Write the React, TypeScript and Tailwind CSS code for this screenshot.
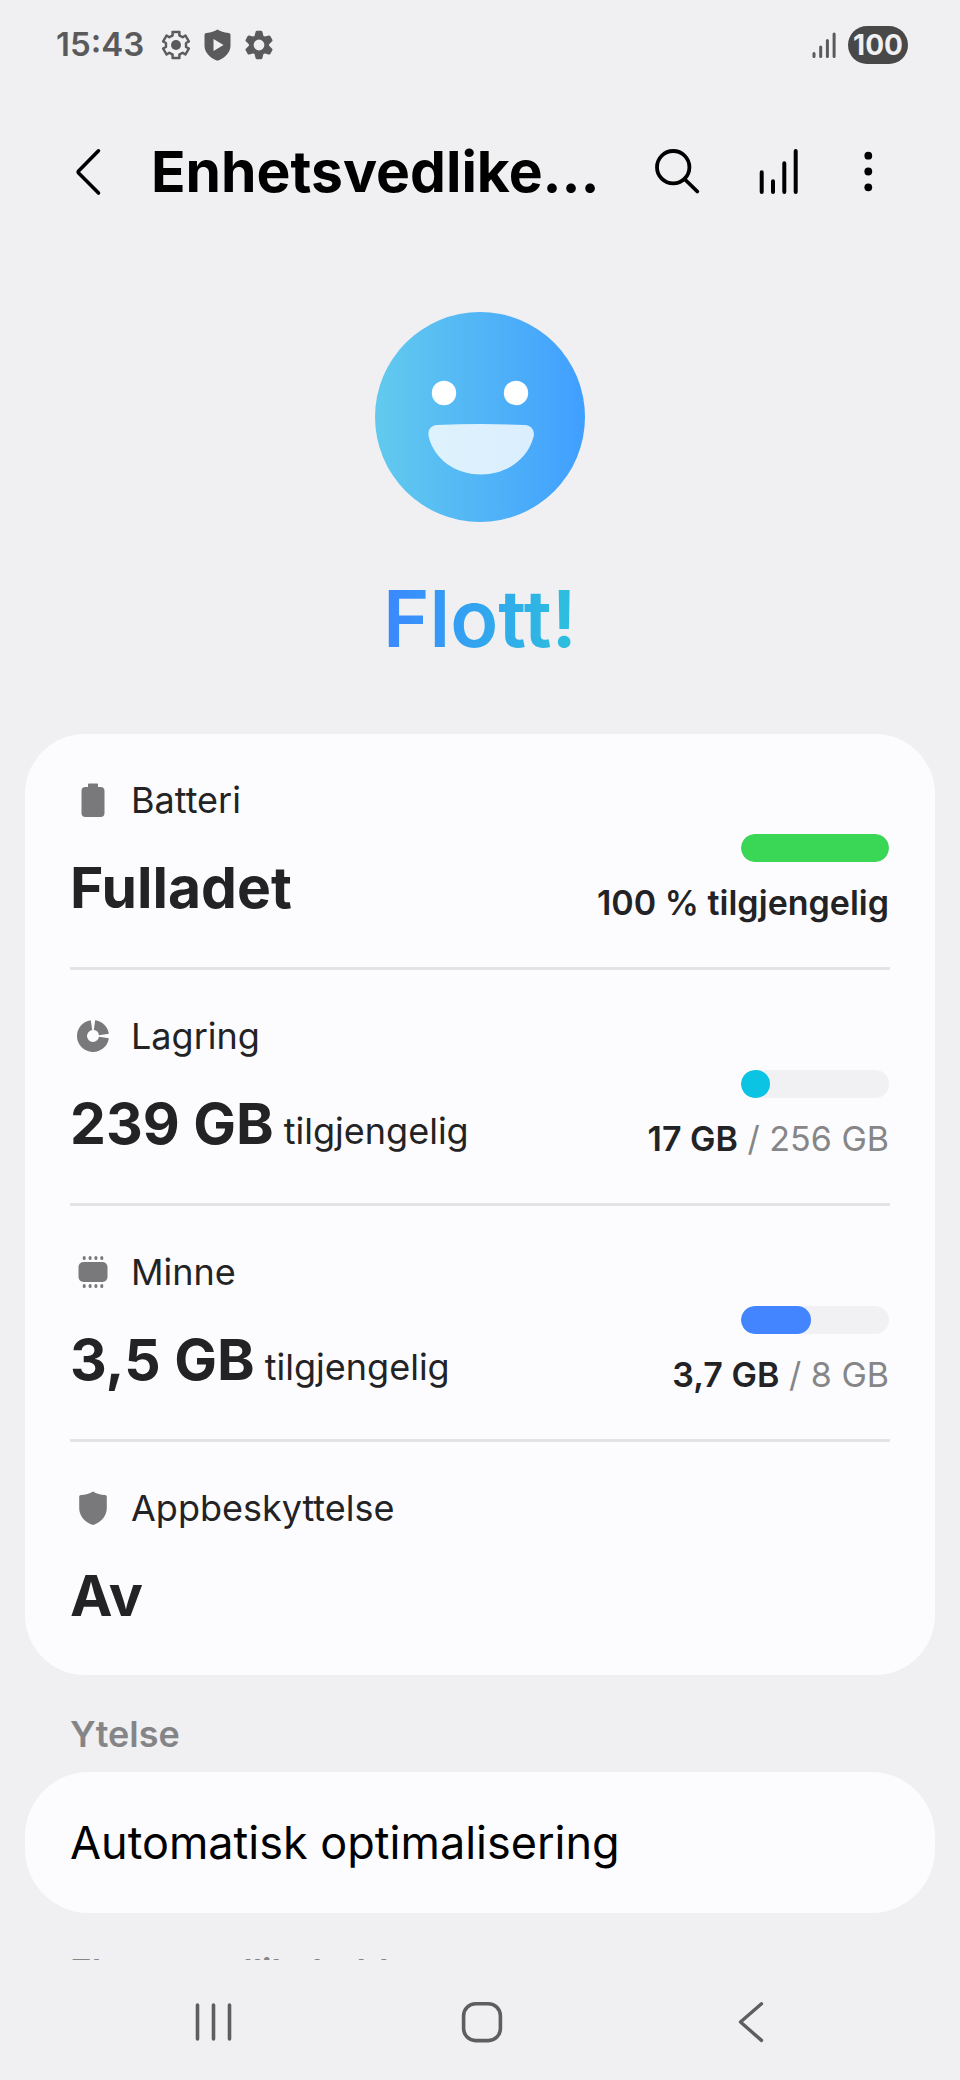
import type { ReactNode } from 'react';

// Outline of a cogwheel centred in a 30x30 box
function gearPath(
  inner: number,
  outer: number,
  innerSpread: number,
  outerSpread: number
) {
  const points: string[] = [];
  for (let i = 0; i < 6; i++) {
    const mid = i * 60 - 90;
    const corners = [
      [inner, mid - innerSpread],
      [outer, mid - outerSpread],
      [outer, mid + outerSpread],
      [inner, mid + innerSpread],
    ];
    for (const [radius, degrees] of corners) {
      const angle = (degrees * Math.PI) / 180;
      points.push(
        `${(15 + radius * Math.cos(angle)).toFixed(2)} ${(15 + radius * Math.sin(angle)).toFixed(2)}`
      );
    }
  }
  return `M${points.join('L')}Z`;
}

function GearOutlineIcon() {
  return (
    <svg viewBox="0 0 30 30" className="size-[30px]" aria-hidden="true">
      <path
        d={gearPath(10.2, 13.4, 19, 15)}
        fill="none"
        stroke="currentColor"
        strokeWidth="2.4"
        strokeLinejoin="round"
      />
      <circle cx="15" cy="15" r="5" fill="currentColor" />
    </svg>
  );
}

function GearSolidIcon() {
  return (
    <svg viewBox="0 0 30 30" className="size-[30px]" aria-hidden="true">
      <path
        d={gearPath(8.8, 13, 22, 9)}
        fill="currentColor"
        stroke="currentColor"
        strokeWidth="2.8"
        strokeLinejoin="round"
      />
      <circle cx="15" cy="15" r="5.4" fill="#f0f0f2" />
    </svg>
  );
}

function ShieldPlayIcon() {
  return (
    <svg viewBox="0 0 27 32" className="h-8 w-[27px]" aria-hidden="true">
      <path
        d="M13.5.5c2.9 2 6.5 3.1 11 3.5 1.2.1 2 .9 2 2v10.5c0 6.5-4.5 12-13 15.2C5 28.5.5 23 .5 16.5V6c0-1.1.8-1.9 2-2C7 3.6 10.6 2.5 13.5.5Z"
        fill="currentColor"
      />
      <path d="M9.5 10v12l10-6Z" fill="#f0f0f2" />
    </svg>
  );
}

function SignalIcon() {
  return (
    <svg
      viewBox="0 0 24 26"
      className="h-[26px] w-6"
      stroke="currentColor"
      strokeWidth="3"
      strokeLinecap="round"
      aria-hidden="true"
    >
      <path d="M2 21.5v3M8.7 15v9.5M15.4 8.5v16M22.1 2v22.5" />
    </svg>
  );
}

function BatteryIcon() {
  return (
    <svg viewBox="0 0 34 34" className="size-[34px]" fill="currentColor">
      <path d="M12 1.5Q12 .5 13 .5h8q1 0 1 1V4h2.5Q28.5 4 28.5 8v22q0 4-4 4h-15Q5.5 34 5.5 30V8q0-4 4-4H12Z" />
    </svg>
  );
}

function StorageIcon() {
  return (
    <svg
      viewBox="0 0 34 34"
      className="size-[34px]"
      fill="none"
      stroke="currentColor"
      strokeWidth="10"
    >
      <path d="M18.5 6.1A11 11 0 0 1 27.9 15.5M27.9 18.5A11 11 0 1 1 15.5 6.1" />
    </svg>
  );
}

function MemoryIcon() {
  return (
    <svg viewBox="0 0 34 34" className="size-[34px]" fill="currentColor">
      <rect x="2.5" y="7" width="29" height="20" rx="5" />
      <path
        d="M8.2 2.4v1M14.1 2.4v1M19.9 2.4v1M25.8 2.4v1M8.2 30.6v1M14.1 30.6v1M19.9 30.6v1M25.8 30.6v1"
        stroke="currentColor"
        strokeWidth="3"
        strokeLinecap="round"
      />
    </svg>
  );
}

function ShieldIcon() {
  return (
    <svg viewBox="0 0 34 34" className="size-[34px]" fill="currentColor">
      <path d="M17 .5c3.5 2.2 7.5 3.2 12 3.6 1.2.1 1.8.8 1.8 1.9v11c0 7.5-5 13.5-12.3 16.6q-1.5.6-3 0C8.2 30.5 3.2 24.5 3.2 17V6c0-1.1.6-1.8 1.8-1.9C9.5 3.7 13.5 2.7 17 .5Z" />
    </svg>
  );
}

function SmileyIcon() {
  return (
    <svg viewBox="0 0 210 210" className="size-[210px]" aria-hidden="true">
      <defs>
        <linearGradient id="face" x1="0" x2="1" y1="0" y2="0">
          <stop offset="0" stopColor="#62caee" />
          <stop offset="0.5" stopColor="#52b5f6" />
          <stop offset="1" stopColor="#409fff" />
        </linearGradient>
      </defs>
      <circle cx="105" cy="105" r="105" fill="url(#face)" />
      <circle cx="69" cy="81" r="12.2" fill="#fff" />
      <circle cx="141" cy="81" r="12.2" fill="#fff" />
      <path
        d="M62 113Q106 111 150 113C157 113.5 160 119 158.5 125C153 146 133 162.5 106 162.5S59 146 53.8 125C52.3 119 55 113.5 62 113Z"
        fill="#fff"
        fillOpacity="0.8"
      />
    </svg>
  );
}

type Status = {
  label: string;
  icon: ReactNode;
  value: string;
  suffix?: string;
  used?: string;
  total?: string;
  percent?: number;
  barColor?: string;
};

const statuses: Status[] = [
  {
    label: 'Batteri',
    icon: <BatteryIcon />,
    value: 'Fulladet',
    used: '100 % tilgjengelig',
    percent: 100,
    barColor: 'bg-[#3ad656]',
  },
  {
    label: 'Lagring',
    icon: <StorageIcon />,
    value: '239 GB',
    suffix: 'tilgjengelig',
    used: '17 GB',
    total: '256 GB',
    percent: 7,
    barColor: 'bg-[#0bc3e3]',
  },
  {
    label: 'Minne',
    icon: <MemoryIcon />,
    value: '3,5 GB',
    suffix: 'tilgjengelig',
    used: '3,7 GB',
    total: '8 GB',
    percent: 47,
    barColor: 'bg-[#4285ff]',
  },
  {
    label: 'Appbeskyttelse',
    icon: <ShieldIcon />,
    value: 'Av',
  },
];

function StatusRow({ status }: { status: Status }) {
  return (
    <li className="border-b-3 border-[#e3e3e5] last:border-b-0">
      <button
        type="button"
        className="flex w-full items-end justify-between pt-[42px] pb-[42px] text-left"
      >
        <span className="flex flex-col gap-[30px] pb-[3px]">
          <span className="flex h-12 items-center gap-[15px] text-[36px]">
            <span className="flex w-[46px] justify-center text-[#79797b]">
              {status.icon}
            </span>
            {status.label}
          </span>
          <span className="text-[57px] leading-[68px] font-bold">
            {status.value}
            {status.suffix && (
              <span className="text-[36px] leading-none font-normal">
                {' '}
                {status.suffix}
              </span>
            )}
          </span>
        </span>
        {status.percent !== undefined && (
          <span className="flex flex-col items-end gap-[19px] pr-px">
            <span className="block h-7 w-[148px] overflow-hidden rounded-full bg-[#f1f1f3]">
              <span
                className={`block h-full min-w-[29px] rounded-full ${status.barColor}`}
                style={{ width: `${status.percent}%` }}
              />
            </span>
            <span className="text-[34px] leading-[44px]">
              <span className="font-semibold">{status.used}</span>
              {status.total && (
                <span className="text-[#868688]"> / {status.total}</span>
              )}
            </span>
          </span>
        )}
      </button>
    </li>
  );
}

function SectionTitle({ children }: { children: ReactNode }) {
  return (
    <h2 className="px-[45px] pt-[35px] pb-[14px] text-[36px] leading-[48px] font-semibold text-[#858587]">
      {children}
    </h2>
  );
}

export default function App() {
  return (
    <div className="flex h-screen flex-col bg-[#f0f0f2] font-['Inter',sans-serif] text-[#232325]">
      <div className="flex h-[90px] shrink-0 items-center justify-between pr-[52px] pl-14 text-[#5a5a5c]">
        <div className="flex items-center gap-[13px]">
          <span className="mr-1 text-[33px] font-semibold">15:43</span>
          <GearOutlineIcon />
          <ShieldPlayIcon />
          <GearSolidIcon />
        </div>
        <div className="flex items-center gap-3">
          <SignalIcon />
          <span className="flex h-[38px] w-[60px] items-center justify-center rounded-full bg-[#484848] text-[28px] font-bold text-[#f0f0f2]">
            100
          </span>
        </div>
      </div>

      <header className="flex h-[164px] shrink-0 items-center pr-[68px] pl-16 text-black">
        <button
          type="button"
          aria-label="Tilbake"
          className="flex size-12 shrink-0 items-center justify-center"
        >
          <svg
            viewBox="0 0 48 48"
            className="size-12"
            fill="none"
            stroke="currentColor"
            strokeWidth="3.6"
            strokeLinecap="round"
            strokeLinejoin="round"
          >
            <path d="M34.5 2.8 14.6 23a1.4 1.4 0 0 0 0 2L34.5 45" />
          </svg>
        </button>
        <h1 className="ml-[39px] min-w-0 flex-1 truncate text-[57px] leading-[72px] font-bold">
          Enhetsvedlikehold
        </h1>
        <button type="button" aria-label="Søk" className="ml-[30px] size-12 shrink-0">
          <svg
            viewBox="0 0 48 48"
            className="size-12"
            fill="none"
            stroke="currentColor"
            strokeWidth="3.8"
            strokeLinecap="round"
          >
            <circle cx="20.2" cy="19.2" r="16.2" />
            <path d="M32 31.5 44.3 43.5" />
          </svg>
        </button>
        <button
          type="button"
          aria-label="Bruksoversikt"
          className="ml-[54px] size-12 shrink-0"
        >
          <svg
            viewBox="0 0 48 48"
            className="size-12"
            stroke="currentColor"
            strokeWidth="4"
            strokeLinecap="round"
          >
            <path d="M6.7 24.2V44M18 33.2V44M29.3 15.2V44M40.7 3V44" />
          </svg>
        </button>
        <button
          type="button"
          aria-label="Flere alternativer"
          className="ml-[41px] size-12 shrink-0"
        >
          <svg viewBox="0 0 48 48" className="size-12" fill="currentColor">
            <circle cx="24.3" cy="7.7" r="3.9" />
            <circle cx="24.3" cy="23.5" r="3.9" />
            <circle cx="24.3" cy="39.3" r="3.9" />
          </svg>
        </button>
      </header>

      <main className="min-h-0 flex-1 overflow-hidden px-[25px]">
        <section className="flex flex-col items-center gap-12 pt-[58px] pb-[68px]">
          <SmileyIcon />
          <p className="bg-linear-to-r from-[#3b87ff] to-[#2dc0dc] bg-clip-text text-[79px] leading-[96px] font-semibold text-transparent">
            Flott!
          </p>
        </section>

        <ul className="rounded-[60px] bg-[#fcfcfe] px-[45px]">
          {statuses.map((status) => (
            <StatusRow key={status.label} status={status} />
          ))}
        </ul>

        <SectionTitle>Ytelse</SectionTitle>
        <button
          type="button"
          className="flex h-[141px] w-full items-center rounded-[64px] bg-[#fcfcfe] px-[45px] text-left text-[45px] text-black"
        >
          Automatisk optimalisering
        </button>

        <SectionTitle>Ekstra vedlikehold</SectionTitle>
      </main>

      <nav className="grid h-[120px] shrink-0 grid-cols-3 place-items-center pt-1 pr-[76px] pl-20 text-[#5e5e60]">
        <button type="button" aria-label="Siste apper">
          <svg
            viewBox="0 0 44 44"
            className="size-11"
            stroke="currentColor"
            strokeWidth="3.6"
            strokeLinecap="round"
          >
            <path d="M5.5 5v34M21.5 5v34M37.5 5v34" />
          </svg>
        </button>
        <button type="button" aria-label="Hjem">
          <svg
            viewBox="0 0 44 44"
            className="size-11"
            fill="none"
            stroke="currentColor"
            strokeWidth="3.6"
          >
            <rect x="3.6" y="3.8" width="36.8" height="36.8" rx="12" />
          </svg>
        </button>
        <button type="button" aria-label="Tilbake">
          <svg
            viewBox="0 0 44 44"
            className="size-11"
            fill="none"
            stroke="currentColor"
            strokeWidth="3.4"
            strokeLinecap="round"
            strokeLinejoin="round"
          >
            <path d="M33.5 3.8 12.5 22 33.5 40.4" />
          </svg>
        </button>
      </nav>
    </div>
  );
}
